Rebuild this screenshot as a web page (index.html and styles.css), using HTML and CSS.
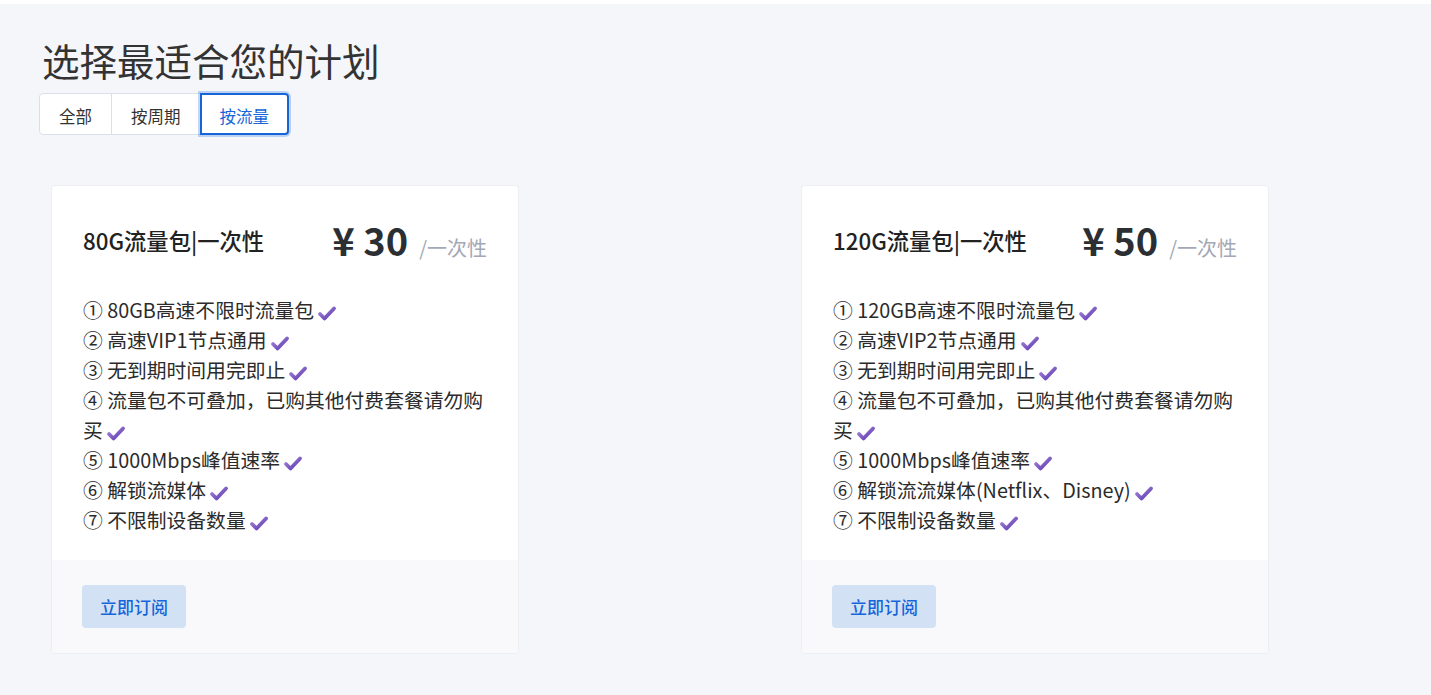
FILE: index.html
```html
<!DOCTYPE html>
<html lang="zh-CN">
<head>
    <meta charset="UTF-8">
    <meta name="viewport" content="width=device-width, initial-scale=1.0">
    <title>购买订阅</title>
    <link rel="stylesheet" href="styles.css">
</head>
<body>

    <div class="topbar"></div>

    <main class="content">
        <h1 class="page-title">选择最适合您的计划</h1>

        <div class="tab-group">
            <button class="tab">全部</button>
            <button class="tab">按周期</button>
            <button class="tab active">按流量</button>
        </div>

        <div class="plans">
            <div class="plan-card">
                <div class="plan-body">
                    <div class="plan-head">
                        <h3 class="plan-name">80G流量包|一次性</h3>
                        <div class="plan-price">
                            <span class="amount">¥ 30</span>
                            <span class="period">/一次性</span>
                        </div>
                    </div>
                    <ul class="plan-features">
                        <li>① 80GB高速不限时流量包<span class="check"></span></li>
                        <li>② 高速VIP1节点通用<span class="check"></span></li>
                        <li>③ 无到期时间用完即止<span class="check"></span></li>
                        <li>④ 流量包不可叠加，已购其他付费套餐请勿购买<span class="check"></span></li>
                        <li>⑤ 1000Mbps峰值速率<span class="check"></span></li>
                        <li>⑥ 解锁流媒体<span class="check"></span></li>
                        <li>⑦ 不限制设备数量<span class="check"></span></li>
                    </ul>
                </div>
                <div class="plan-foot">
                    <button class="subscribe-btn">立即订阅</button>
                </div>
            </div>

            <div class="plan-card">
                <div class="plan-body">
                    <div class="plan-head">
                        <h3 class="plan-name">120G流量包|一次性</h3>
                        <div class="plan-price">
                            <span class="amount">¥ 50</span>
                            <span class="period">/一次性</span>
                        </div>
                    </div>
                    <ul class="plan-features">
                        <li>① 120GB高速不限时流量包<span class="check"></span></li>
                        <li>② 高速VIP2节点通用<span class="check"></span></li>
                        <li>③ 无到期时间用完即止<span class="check"></span></li>
                        <li>④ 流量包不可叠加，已购其他付费套餐请勿购买<span class="check"></span></li>
                        <li>⑤ 1000Mbps峰值速率<span class="check"></span></li>
                        <li>⑥ 解锁流流媒体(Netflix、Disney)<span class="check"></span></li>
                        <li>⑦ 不限制设备数量<span class="check"></span></li>
                    </ul>
                </div>
                <div class="plan-foot">
                    <button class="subscribe-btn">立即订阅</button>
                </div>
            </div>
        </div>
    </main>

    <script>
        // Häkchen-Icon in jede Zeile einsetzen
        const checkIcon = `
            <svg width="20" height="17" viewBox="0 0 20 17">
                <defs>
                    <linearGradient id="ck" x1="0" y1="0" x2="1" y2="1">
                        <stop offset="0" stop-color="#a48ad8"/>
                        <stop offset="1" stop-color="#5e35b1"/>
                    </linearGradient>
                </defs>
                <polyline points="3,9 7.5,13.5 17,3.5" fill="none" stroke="url(#ck)"
                    stroke-width="3.8" stroke-linecap="round" stroke-linejoin="round"/>
            </svg>`;

        document.querySelectorAll(".check").forEach(el => {
            el.innerHTML = checkIcon;
        });
    </script>

</body>
</html>
```

FILE: styles.css
```css
body {
    font-family: "Noto Sans CJK SC", "Noto Sans", sans-serif;
    margin: 0;
    padding: 0;
    background: #f5f6fa;
    color: #333;
}

.topbar {
    height: 4px;
    background: #fff;
}

.content {
    padding: 34px 39px 40px;
}

.page-title {
    font-size: 37.5px;
    font-weight: 400;
    line-height: 43px;
    margin: 0 0 12px 3px;
    color: #333;
}

.tab-group {
    display: inline-flex;
}

.tab {
    font-family: inherit;
    font-size: 16.5px;
    color: #333;
    background: #fff;
    border: 1px solid #dbdfea;
    height: 42px;
    padding: 3px 19px 0;
    margin-left: -1px;
    cursor: pointer;
}

.tab:first-child {
    margin-left: 0;
    border-radius: 4px 0 0 4px;
}

.tab:last-child {
    border-radius: 0 4px 4px 0;
}

.tab.active {
    color: #1565d8;
    border: 2px solid #1565d8;
    padding: 3px 18px 0;
    box-shadow: 0 0 0 2px rgba(21, 101, 216, 0.25);
    position: relative;
}

.plans {
    display: grid;
    grid-template-columns: 468px 468px;
    column-gap: 282px;
    margin: 50px 0 0 12px;
}

.plan-card {
    background: #fff;
    border: 1px solid #eceef4;
    border-radius: 4px;
    overflow: hidden;
}

.plan-body {
    padding: 26px 31px 25px;
}

.plan-head {
    display: flex;
    justify-content: space-between;
    align-items: center;
    margin-bottom: 28px;
}

.plan-name {
    margin: 0;
    font-size: 22.3px;
    font-weight: 500;
    color: #222;
}

.plan-price {
    display: flex;
    align-items: baseline;
    gap: 11px;
}

.amount {
    font-size: 38px;
    font-weight: 700;
    color: #2b2f33;
}

.period {
    font-size: 20px;
    color: #a3a8b4;
}

.plan-features {
    list-style: none;
    margin: 0;
    padding: 0;
    font-size: 19.8px;
    line-height: 30px;
    color: #2b2b2b;
}

.check {
    display: inline-block;
    width: 20px;
    height: 17px;
    margin-left: 3px;
    vertical-align: -4px;
}

.plan-foot {
    background: #f9f9fb;
    padding: 25px 30px 25px;
}

.subscribe-btn {
    font-family: inherit;
    font-size: 17px;
    font-weight: 500;
    color: #1565d8;
    background: #d3e1f5;
    border: none;
    border-radius: 4px;
    height: 43px;
    padding: 0 18px;
    cursor: pointer;
}
```
